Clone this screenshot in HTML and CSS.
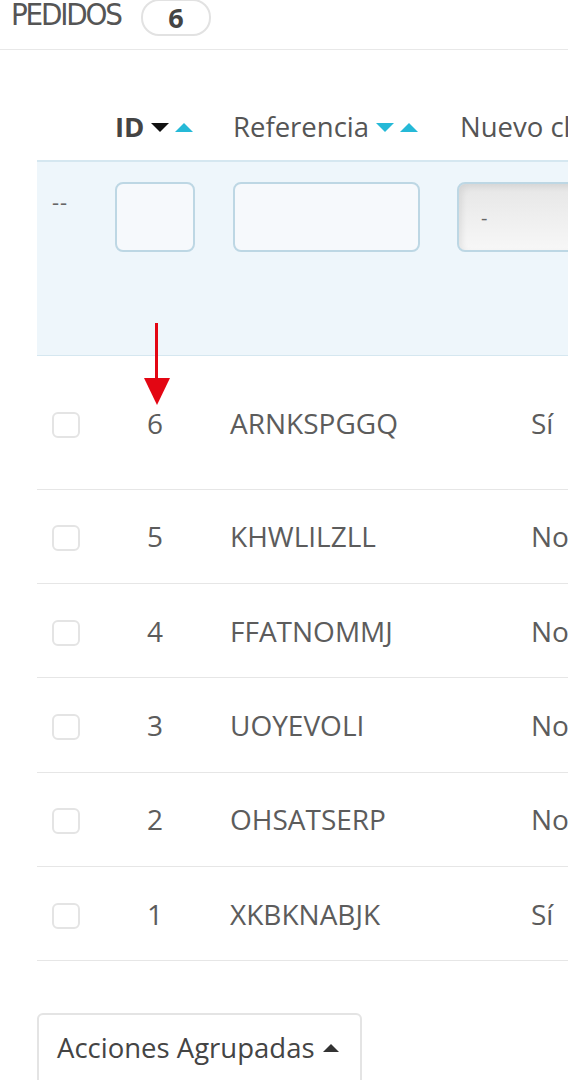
FILE: index.html
```html
<!DOCTYPE html>
<html lang="es">
<head>
  <meta charset="UTF-8" />
  <meta name="viewport" content="width=device-width, initial-scale=1" />
  <title>Pedidos</title>
  <link rel="stylesheet" href="styles.css">
</head>
<body>
  <header class="toolbar">
    <h1>Pedidos</h1>
    <span class="badge">6</span>
  </header>

  <div class="panel">
    <table class="orders">
      <thead>
        <tr class="heading">
          <th class="col-check"></th>
          <th class="col-id"><b>ID</b><span class="sort"><i class="down dark"></i><i class="up"></i></span></th>
          <th class="col-ref">Referencia<span class="sort"><i class="down"></i><i class="up"></i></span></th>
          <th class="col-new">Nuevo cliente</th>
        </tr>
        <tr class="filter">
          <td class="col-check"><span class="dashes">--</span></td>
          <td class="col-id"><input type="text" class="id-input" /></td>
          <td class="col-ref"><input type="text" class="ref-input" /></td>
          <td class="col-new"><div class="select">-</div></td>
        </tr>
      </thead>
      <tbody>
        <tr class="first">
          <td class="col-check"><span class="checkbox"></span></td>
          <td class="col-id"><span class="num">6</span></td>
          <td class="col-ref">ARNKSPGGQ</td>
          <td class="col-new">Sí</td>
        </tr>
        <tr>
          <td class="col-check"><span class="checkbox"></span></td>
          <td class="col-id"><span class="num">5</span></td>
          <td class="col-ref">KHWLILZLL</td>
          <td class="col-new">No</td>
        </tr>
        <tr>
          <td class="col-check"><span class="checkbox"></span></td>
          <td class="col-id"><span class="num">4</span></td>
          <td class="col-ref">FFATNOMMJ</td>
          <td class="col-new">No</td>
        </tr>
        <tr>
          <td class="col-check"><span class="checkbox"></span></td>
          <td class="col-id"><span class="num">3</span></td>
          <td class="col-ref">UOYEVOLI</td>
          <td class="col-new">No</td>
        </tr>
        <tr>
          <td class="col-check"><span class="checkbox"></span></td>
          <td class="col-id"><span class="num">2</span></td>
          <td class="col-ref">OHSATSERP</td>
          <td class="col-new">No</td>
        </tr>
        <tr>
          <td class="col-check"><span class="checkbox"></span></td>
          <td class="col-id"><span class="num">1</span></td>
          <td class="col-ref">XKBKNABJK</td>
          <td class="col-new">Sí</td>
        </tr>
      </tbody>
    </table>

    <!-- annotation arrow pointing at the ID column -->
    <svg class="arrow" width="28" height="84" viewBox="0 0 28 84">
      <rect x="12" y="0" width="3" height="58" fill="#e30613" />
      <polygon points="1,55 27,55 14,82" fill="#e30613" />
    </svg>

    <button class="bulk">Acciones Agrupadas <i class="caret"></i></button>
  </div>
</body>
</html>
```

FILE: styles.css
```css
body {
  margin: 0;
  font-family: "Open Sans", "Noto Sans", sans-serif;
  color: #555;
  background: #fff;
  overflow: hidden;
}

.toolbar {
  display: flex;
  align-items: flex-start;
  gap: 20px;
  height: 49px;
  padding-left: 11px;
  border-bottom: 1px solid #e8e8e8;
}

.toolbar h1 {
  margin: 0;
  font-family: "Liberation Sans Narrow", "DejaVu Sans Condensed", sans-serif;
  font-stretch: condensed;
  font-weight: normal;
  font-size: 31px;
  line-height: 28px;
  letter-spacing: -2.2px;
  text-transform: uppercase;
  color: #555;
}

.badge {
  display: inline-flex;
  align-items: center;
  justify-content: center;
  width: 66px;
  height: 33px;
  margin-top: -1px;
  border: 2px solid #e2e2e2;
  border-radius: 18px;
  font-weight: bold;
  font-size: 27px;
  line-height: 1;
  color: #444;
}

.panel {
  position: relative;
  padding: 0 0 0 37px;
  width: 700px;
}

.orders {
  border-collapse: collapse;
  margin-top: 50px;
  font-size: 28px;
  table-layout: fixed;
}

.orders th,
.orders td {
  padding: 0;
  text-align: left;
  white-space: nowrap;
}

.col-check { width: 63px; padding-left: 15px !important; box-sizing: border-box; }
.col-id { width: 115px; padding-left: 15px !important; box-sizing: border-box; }
.col-ref { width: 222px; padding-left: 18px !important; box-sizing: border-box; }
.col-new { width: 300px; padding-left: 23px !important; box-sizing: border-box; overflow: hidden; }

.heading th {
  height: 61px;
  padding-bottom: 8px !important;
  font-weight: normal;
  font-size: 27.5px;
  color: #555;
  vertical-align: middle;
}

.heading b {
  color: #444;
}

.sort {
  display: inline-flex;
  gap: 6px;
  margin-left: 7px;
  vertical-align: 5px;
}

.sort i {
  width: 0;
  height: 0;
  border-left: 9px solid transparent;
  border-right: 9px solid transparent;
}

.sort .down { border-top: 9px solid #25b9d7; }
.sort .down.dark { border-top-color: #111; }
.sort .up { border-bottom: 9px solid #25b9d7; }

.filter td {
  height: 194px;
  background: #eef6fb;
  border-top: 2px solid #d5e7f0;
  border-bottom: 1px solid #d5e7f0;
  vertical-align: top;
  padding-top: 20px !important;
  box-sizing: border-box;
}

.filter .col-new {
  padding-left: 20px !important;
}

.filter input {
  display: block;
  height: 70px;
  box-sizing: border-box;
  border: 2px solid #bdd7e4;
  border-radius: 8px;
  background: #f6f9fc;
  padding: 0;
}

.id-input { width: 80px; }
.ref-input { width: 187px; }

.dashes {
  display: block;
  margin-top: 4px;
  font-size: 22px;
  color: #666;
  letter-spacing: 1px;
}

.select {
  width: 240px;
  height: 70px;
  box-sizing: border-box;
  border: 2px solid #bdd7e4;
  border-radius: 8px;
  background: linear-gradient(#e6e6e6, #f7f7f7);
  box-shadow: inset 3px 3px 6px rgba(0, 0, 0, 0.08);
  padding: 20px 0 0 22px;
  font-size: 20px;
  color: #666;
}

tbody td {
  height: 94.4px;
  border-bottom: 1px solid #e6e6e6;
  vertical-align: middle;
  color: #5c5c5c;
  box-sizing: border-box;
}

tbody .col-ref {
  padding-left: 15px !important;
}

tbody tr.first td {
  height: 134px;
  padding-top: 2px !important;
}

tbody .col-new {
  padding-left: 94px !important;
}

.num {
  display: inline-block;
  width: 80px;
  text-align: center;
}

.checkbox {
  display: block;
  width: 28px;
  height: 26px;
  border: 2px solid #e4e4e4;
  border-radius: 6px;
  box-sizing: border-box;
  margin-top: 4px;
}

.arrow {
  position: absolute;
  left: 143px;
  top: 223px;
}

.bulk {
  display: flex;
  align-items: center;
  gap: 8px;
  margin-top: 52px;
  width: 325px;
  height: 90px;
  padding: 0 0 22px 18px;
  background: #fff;
  border: 2px solid #e4e4e4;
  border-radius: 6px;
  font-family: "Open Sans", "Noto Sans", sans-serif;
  font-size: 27.5px;
  color: #444;
}

.caret {
  width: 0;
  height: 0;
  border-left: 8px solid transparent;
  border-right: 8px solid transparent;
  border-bottom: 8px solid #333;
  margin-top: 2px;
}
```
